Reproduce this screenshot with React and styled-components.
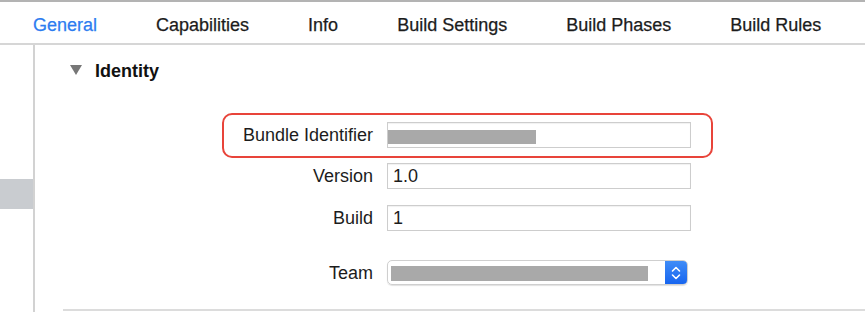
import React from "react";
import styled, { createGlobalStyle } from "styled-components";

const GlobalStyle = createGlobalStyle`
  html, body { margin: 0; padding: 0; background: #ffffff; }
  body { font-family: "Liberation Sans", Arial, sans-serif; color: #1c1c1c; }
`;

const Window = styled.div`
  width: 865px;
  height: 314px;
  display: flex;
  flex-direction: column;
  overflow: hidden;
  background: #ffffff;
`;

const TabBar = styled.div`
  height: 37px;
  padding-top: 4px;
  padding-left: 33px;
  display: flex;
  align-items: center;
  gap: 59px;
  border-top: 2px solid #b3b3b3;
  border-bottom: 2px solid #d6d6d6;
`;

const Tab = styled.div`
  font-size: 18px;
  line-height: 22px;
  white-space: nowrap;
  color: ${ props => ( props.$active ? "#2d7cf0" : "#1c1c1c" ) };
  -webkit-text-stroke: 0.25px ${ props => ( props.$active ? "#2d7cf0" : "#1c1c1c" ) };
`;

const Body = styled.div`
  flex: 1;
  display: flex;
`;

const Sidebar = styled.div`
  width: 33px;
  padding-top: 134px;
  border-right: 2px solid #d2d2d2;
  margin-bottom: 2px;
`;

const SidebarRow = styled.div`
  height: 30px;
  background: ${ props => ( props.$selected ? "#c9ccd0" : "transparent" ) };
`;

const Main = styled.div`
  flex: 1;
`;

const Section = styled.div`
  margin-left: 28px;
  padding-top: 15px;
  padding-bottom: 24px;
  border-bottom: 2px solid #dcdcdc;
`;

const SectionHeader = styled.div`
  display: flex;
  align-items: center;
  gap: 13px;
  padding-left: 7px;
  font-size: 18px;
  line-height: 22px;
  font-weight: bold;
  color: #111;
`;

const Disclosure = styled.svg`
  width: 12px;
  height: 12px;
  margin-top: -3px;
`;

const Form = styled.div`
  margin-left: 177px;
  margin-top: 40px;
  display: flex;
  flex-direction: column;
  align-items: flex-start;
`;

const Row = styled.div`
  display: flex;
  align-items: center;
  gap: 14px;
  margin-top: ${ props => props.$space || 0 }px;
`;

const Highlight = styled.div`
  margin: -9px -22px -10px -18px;
  padding: 7px 20px 8px 16px;
  border: 2px solid #e8443a;
  border-radius: 10px;
`;

const Label = styled.div`
  width: 133px;
  text-align: right;
  font-size: 18px;
  line-height: 22px;
  white-space: nowrap;
  color: #1c1c1c;
`;

const Field = styled.div`
  position: relative;
  width: 304px;
  height: 26px;
  box-sizing: border-box;
  border: 1px solid #cdcdcd;
  box-shadow: inset 0 1px 1px rgba(0, 0, 0, 0.06);
  padding-left: 5px;
  display: flex;
  align-items: center;
  font-size: 18px;
  color: #1c1c1c;
`;

const Redacted = styled.div`
  position: absolute;
  left: ${ props => props.$left }px;
  top: ${ props => props.$top }px;
  width: ${ props => props.$width }px;
  height: ${ props => props.$height }px;
  background: #a9a9a9;
  filter: blur(0.6px);
`;

const Select = styled.div`
  position: relative;
  width: 301px;
  height: 25px;
  box-sizing: border-box;
  border: 1px solid #cfcfcf;
  border-radius: 5px;
  box-shadow: 0 1px 1px rgba(0, 0, 0, 0.12);
  display: flex;
  justify-content: flex-end;
  overflow: hidden;
`;

const Stepper = styled.div`
  width: 22px;
  height: 100%;
  background: linear-gradient(#3f8cf7, #1765ef);
  display: flex;
  align-items: center;
  justify-content: center;
`;

const Chevrons = () => (
    <svg width="10" height="16" viewBox="0 0 10 16">
        <path d="M1.5 6 L5 2.5 L8.5 6" fill="none" stroke="#fff" strokeWidth="1.6" strokeLinecap="round" strokeLinejoin="round" />
        <path d="M1.5 10 L5 13.5 L8.5 10" fill="none" stroke="#fff" strokeWidth="1.6" strokeLinecap="round" strokeLinejoin="round" />
    </svg>
);

const tabs = [ "General", "Capabilities", "Info", "Build Settings", "Build Phases", "Build Rules" ];

const App = () => (
    <Window>
        <GlobalStyle />
        <TabBar>
            {tabs.map( ( t, i ) => (
                <Tab key={ t } $active={ i === 0 }>{t}</Tab>
            ) )}
        </TabBar>
        <Body>
            <Sidebar>
                <SidebarRow $selected />
            </Sidebar>
            <Main>
                <Section>
                    <SectionHeader>
                        <Disclosure viewBox="0 0 12 12">
                            <path d="M0 1 L12 1 L6 11 Z" fill="#777" />
                        </Disclosure>
                        Identity
                    </SectionHeader>
                    <Form>
                        <Highlight>
                            <Row>
                                <Label>Bundle Identifier</Label>
                                <Field>
                                    <Redacted $left={ 0 } $top={ 7 } $width={ 148 } $height={ 14 } />
                                </Field>
                            </Row>
                        </Highlight>
                        <Row $space={ 15 }>
                            <Label>Version</Label>
                            <Field>1.0</Field>
                        </Row>
                        <Row $space={ 16 }>
                            <Label>Build</Label>
                            <Field>1</Field>
                        </Row>
                        <Row $space={ 29 }>
                            <Label>Team</Label>
                            <Select>
                                <Redacted $left={ 3 } $top={ 5 } $width={ 257 } $height={ 15 } />
                                <Stepper>
                                    <Chevrons />
                                </Stepper>
                            </Select>
                        </Row>
                    </Form>
                </Section>
            </Main>
        </Body>
    </Window>
);

export default App;
